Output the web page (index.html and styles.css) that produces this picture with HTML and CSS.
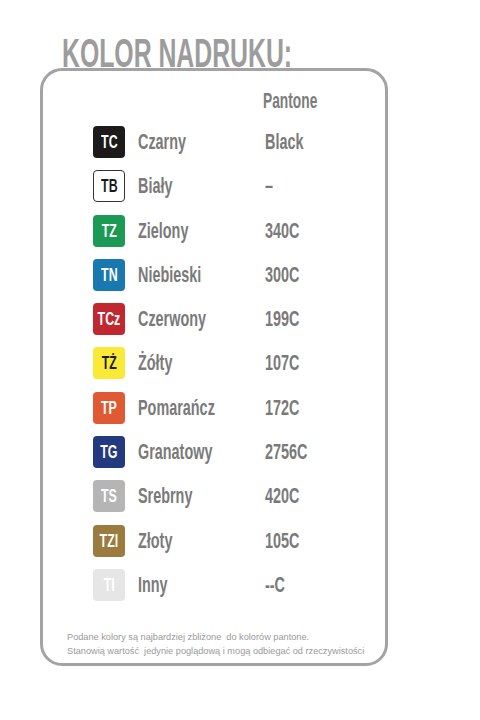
FILE: index.html
```html
<!DOCTYPE html>
<html lang="pl">
<head>
<meta charset="utf-8">
<title>Kolor nadruku</title>
<link rel="stylesheet" href="styles.css">
</head>
<body>
<main class="page">
  <h1 class="title"><span class="cond-title">KOLOR NADRUKU:</span></h1>
  <section class="card">
    <div class="head"><span class="head-label cond">Pantone</span></div>
    <ul class="list">
      <li class="row"><span class="badge b-black"><span class="cond-badge">TC</span></span><span class="name"><span class="cond">Czarny</span></span><span class="val"><span class="cond">Black</span></span></li>
      <li class="row"><span class="badge b-white"><span class="cond-badge">TB</span></span><span class="name"><span class="cond">Biały</span></span><span class="val"><span class="cond">–</span></span></li>
      <li class="row"><span class="badge b-green"><span class="cond-badge">TZ</span></span><span class="name"><span class="cond">Zielony</span></span><span class="val"><span class="cond">340C</span></span></li>
      <li class="row"><span class="badge b-blue"><span class="cond-badge">TN</span></span><span class="name"><span class="cond">Niebieski</span></span><span class="val"><span class="cond">300C</span></span></li>
      <li class="row"><span class="badge b-red"><span class="cond-badge">TCz</span></span><span class="name"><span class="cond">Czerwony</span></span><span class="val"><span class="cond">199C</span></span></li>
      <li class="row"><span class="badge b-yellow"><span class="cond-badge">TŻ</span></span><span class="name"><span class="cond">Żółty</span></span><span class="val"><span class="cond">107C</span></span></li>
      <li class="row"><span class="badge b-orange"><span class="cond-badge">TP</span></span><span class="name"><span class="cond">Pomarańcz</span></span><span class="val"><span class="cond">172C</span></span></li>
      <li class="row"><span class="badge b-navy"><span class="cond-badge">TG</span></span><span class="name"><span class="cond">Granatowy</span></span><span class="val"><span class="cond">2756C</span></span></li>
      <li class="row"><span class="badge b-silver"><span class="cond-badge">TS</span></span><span class="name"><span class="cond">Srebrny</span></span><span class="val"><span class="cond">420C</span></span></li>
      <li class="row"><span class="badge b-gold"><span class="cond-badge">TZl</span></span><span class="name"><span class="cond">Złoty</span></span><span class="val"><span class="cond">105C</span></span></li>
      <li class="row"><span class="badge b-light"><span class="cond-badge">TI</span></span><span class="name"><span class="cond">Inny</span></span><span class="val"><span class="cond">--C</span></span></li>
    </ul>
    <p class="note">Podane kolory są najbardziej zbliżone&nbsp; do kolorów pantone.<br>Stanowią wartość&nbsp; jedynie poglądową i mogą odbiegać od rzeczywistości</p>
  </section>
</main>
</body>
</html>
```

FILE: styles.css
```css
* { box-sizing: border-box; }
html, body { margin: 0; padding: 0; background: #ffffff; }
body { width: 480px; height: 720px; overflow: hidden; }

.page {
  padding: 33px 0 0 40px;
  display: flex;
  flex-direction: column;
  align-items: flex-start;
}

.title {
  margin: 0 0 -6px 22px;
  font-family: "Liberation Sans", Arial, sans-serif;
  font-weight: 700;
  font-size: 41px;
  line-height: 41px;
  color: #9c9c9c;
  white-space: nowrap;
}
.cond-title {
  display: inline-block;
  transform: scaleX(0.605);
  transform-origin: 0 50%;
}

.card {
  width: 348px;
  height: 598px;
  border: 3.5px solid #a3a3a3;
  border-radius: 22px;
  padding: 18px 0 0 50px;
  display: flex;
  flex-direction: column;
}

.head {
  height: 24px;
  padding-left: 170px;
  margin-bottom: 13px;
}

.head-label, .name, .val, .badge {
  font-family: "Liberation Sans", Arial, sans-serif;
  font-weight: 700;
  white-space: nowrap;
}
.head-label { font-size: 21.5px; line-height: 24px; color: #7c7c7c; }

.cond {
  display: inline-block;
  transform: scaleX(0.64);
  transform-origin: 0 50%;
}

.list {
  list-style: none;
  margin: 0;
  padding: 0;
  display: flex;
  flex-direction: column;
  gap: 12.3px;
}

.row {
  display: flex;
  align-items: center;
  height: 32px;
}

.badge {
  width: 32px;
  height: 32px;
  border-radius: 4px;
  display: flex;
  align-items: center;
  justify-content: center;
  color: #ffffff;
  font-size: 18.5px;
  flex: none;
}
.cond-badge {
  display: inline-block;
  transform: scaleX(0.67);
  transform-origin: 50% 50%;
}
.b-black { background: #1c1a1a; }
.b-white { background: #ffffff; color: #1a1a1a; border: 1px solid #333333; }
.b-green { background: #1b9a56; }
.b-blue { background: #1a78b0; }
.b-red { background: #c1272f; }
.b-yellow { background: #fbe937; color: #1a1a1a; }
.b-orange { background: #df5a33; }
.b-navy { background: #243a80; }
.b-silver { background: #b5b5b5; }
.b-gold { background: #9b7b3e; }
.b-light { background: #e6e6e6; }

.name {
  width: 127px;
  margin-left: 13px;
  font-size: 22.5px;
  color: #7a7a7a;
}
.val {
  font-size: 22.5px;
  color: #7a7a7a;
}

.note {
  margin: auto 0 5.5px -26px;
  font-family: "Liberation Sans", Arial, sans-serif;
  font-size: 9.2px;
  line-height: 14px;
  color: #9a9a9a;
  white-space: nowrap;
}
```
